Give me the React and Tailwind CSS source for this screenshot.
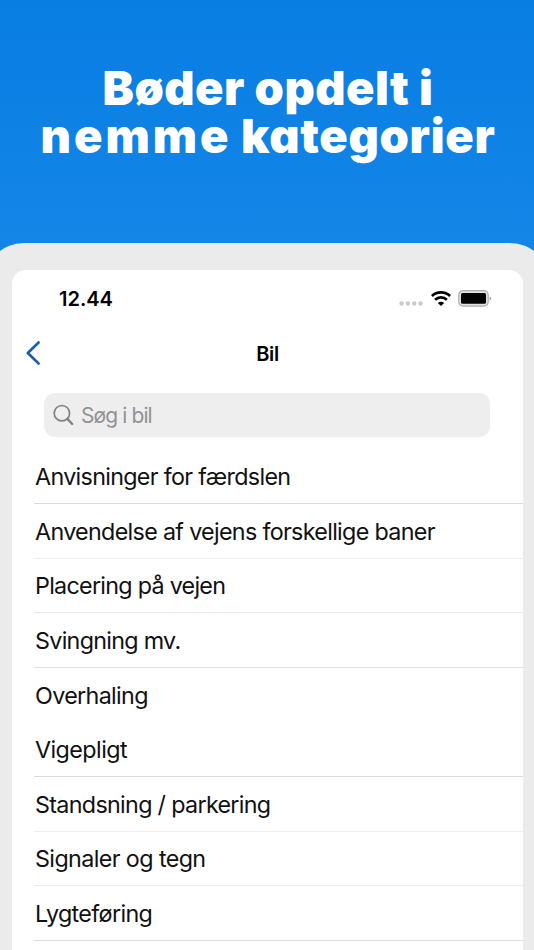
const categories = [
  { name: "Anvisninger for færdslen", tracking: "tracking-[-0.68px]", line: "bg-[#dadada]" },
  { name: "Anvendelse af vejens forskellige baner", tracking: "tracking-[-0.68px]", line: "bg-[#efefef]" },
  { name: "Placering på vejen", tracking: "tracking-[-0.72px]", line: "bg-[#e9e9e9]" },
  { name: "Svingning mv.", tracking: "tracking-[-0.7px]", line: "bg-[#dedede]" },
  { name: "Overhaling", tracking: "tracking-[-0.66px]", line: "bg-transparent" },
  { name: "Vigepligt", tracking: "tracking-[-0.56px]", line: "bg-[#dadada]" },
  { name: "Standsning / parkering", tracking: "tracking-[-0.68px]", line: "bg-[#efefef]" },
  { name: "Signaler og tegn", tracking: "tracking-[-0.6px]", line: "bg-[#ececec]" },
  { name: "Lygteføring", tracking: "tracking-[-0.64px]", line: "bg-[#dcdcdc]" },
];

const SignalDots = () => (
  <svg width="24" height="5" viewBox="0 0 24 5" fill="#cbcbcb">
    {[2.6, 8.9, 15.2, 21.5].map((cx) => (
      <circle key={cx} cx={cx} cy="2.5" r="2.2" />
    ))}
  </svg>
);

const WifiIcon = () => (
  <svg width="20" height="16" viewBox="0 0 20 16" fill="none" stroke="black">
    <path d="M0.9 5C6 0.2 14 0.2 19.1 5" strokeWidth="2.7" />
    <path d="M4.1 8.7C7.4 5.7 12.6 5.7 15.9 8.7" strokeWidth="2.7" />
    <path d="M10 15.1L6.8 11.9C8.6 10.3 11.4 10.3 13.2 11.9Z" fill="black" stroke="none" />
  </svg>
);

const BatteryIcon = () => (
  <svg width="34" height="17" viewBox="0 0 34 17" fill="none">
    <rect x="0.8" y="0.7" width="29.4" height="15.4" rx="4.3" fill="#e2e2e2" stroke="#ababab" strokeWidth="1.2" />
    <rect x="3" y="3" width="25" height="10.8" rx="1.5" fill="black" />
    <path d="M31.6 6.4C33.6 7.2 33.6 9.6 31.6 10.4Z" fill="#9c9c9c" />
  </svg>
);

const StatusBar = () => (
  <div className="flex h-[57px] items-center pl-[47px] pr-[31px]">
    <span className="text-[20px] font-semibold leading-none">12.44</span>
    <div className="ml-auto flex items-center">
      <div className="mr-[8px] mt-[10px]">
        <SignalDots />
      </div>
      <WifiIcon />
      <div className="ml-[7px]">
        <BatteryIcon />
      </div>
    </div>
  </div>
);

const Header = () => (
  <div className="grid h-[53px] grid-cols-[1fr_auto_1fr] items-center">
    <svg className="mb-px ml-[13px]" width="16" height="26" viewBox="0 0 16 26" fill="none">
      <path d="M13.6 2.5L2.8 13L13.6 23.5" stroke="#1a5ca8" strokeWidth="2.6" strokeLinecap="round" strokeLinejoin="round" />
    </svg>
    <h2 className="text-[20px] font-semibold leading-none tracking-[-0.4px]">Bil</h2>
  </div>
);

const SearchField = () => (
  <div className="ml-8 mr-[33px] mt-[13px] flex h-11 items-center rounded-[11px] bg-[#eeeeee] pl-[9px] text-[#929296]">
    <svg width="21" height="22" viewBox="0 0 21 22" fill="none" stroke="#808084" strokeLinecap="round">
      <circle cx="8.9" cy="9.2" r="7.7" strokeWidth="1.7" />
      <path d="M14.4 14.9L19.2 20" strokeWidth="2.3" />
    </svg>
    <span className="ml-[7px] text-[21px] leading-none tracking-[-0.9px]">Søg i bil</span>
  </div>
);

export default function App() {
  return (
    <div className="flex h-[950px] w-[534px] flex-col overflow-hidden bg-gradient-to-b from-[#087de2] from-0% to-[#1486e8] to-[27%] font-['Inter',sans-serif]">
      <h1 className="h-[243px] shrink-0 pl-[2px] pt-[64px] text-center text-[47px] font-black leading-[47.5px] text-white [font-feature-settings:'cv11']">
        <span className="block tracking-[0.45px]">Bøder opdelt i</span>
        <span className="block">
          <span className="tracking-[3px]">nemme</span> <span className="tracking-[0.7px]">kategorier</span>
        </span>
      </h1>
      <div className="-mx-4 flex-1 rounded-t-[40px] bg-[#ebebeb] pl-7 pr-[27px] pt-[27px]">
        <div className="h-[680px] rounded-t-[14px] bg-white text-black">
          <StatusBar />
          <Header />
          <SearchField />
          <ul className="ml-[22px] mt-[12.6px]">
            {categories.map((item) => (
              <li key={item.name} className="flex h-[54.6px] flex-col">
                <span className={`flex flex-1 items-center whitespace-nowrap pl-px pt-[0.8px] text-[23.3px] leading-none text-[#111] ${item.tracking}`}>
                  {item.name}
                </span>
                <span className={`h-px ${item.line}`} />
              </li>
            ))}
          </ul>
        </div>
      </div>
    </div>
  );
}
